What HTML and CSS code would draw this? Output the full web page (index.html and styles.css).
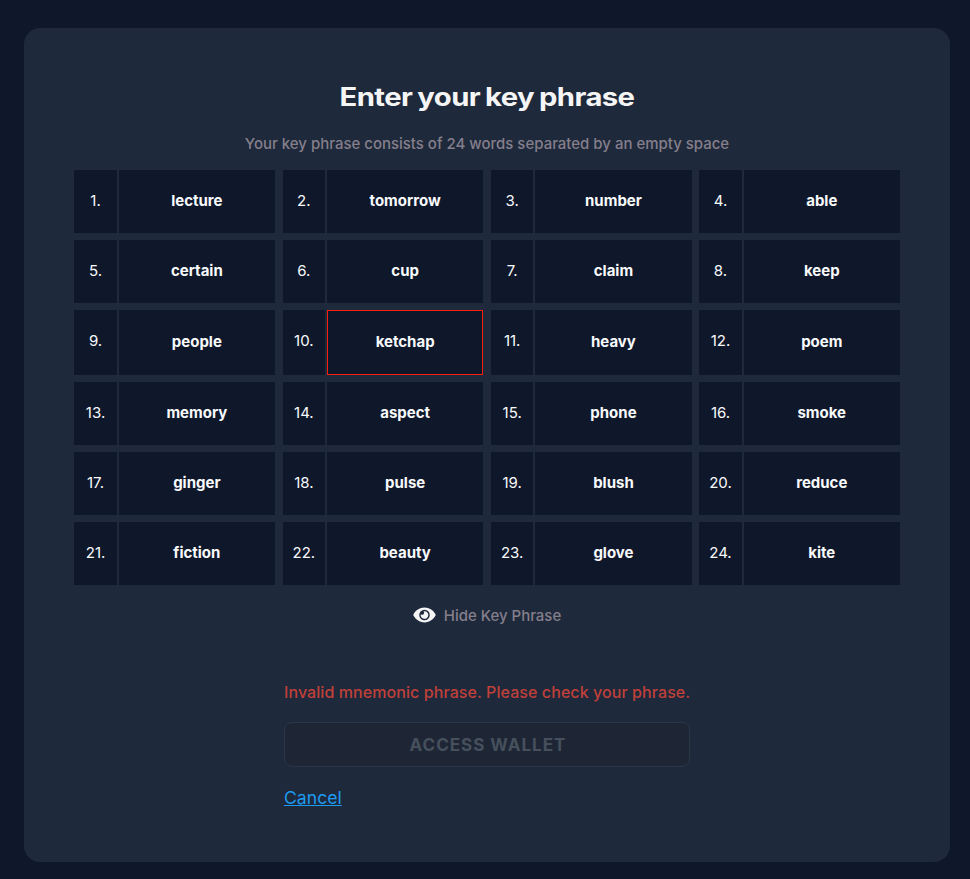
FILE: index.html
```html
<!DOCTYPE html>
<html lang="en">
<head>
<meta charset="utf-8">
<title>Enter your key phrase</title>
<link rel="stylesheet" href="styles.css">
</head>
<body>
<main class="card">
  <h1 class="title">Enter your key phrase</h1>
  <p class="subtitle">Your key phrase consists of 24 words separated by an empty space</p>
  <div class="words">
    <div class="word"><span class="num">1.</span><span class="text">lecture</span></div>
    <div class="word"><span class="num">2.</span><span class="text">tomorrow</span></div>
    <div class="word"><span class="num">3.</span><span class="text">number</span></div>
    <div class="word"><span class="num">4.</span><span class="text">able</span></div>
    <div class="word"><span class="num">5.</span><span class="text">certain</span></div>
    <div class="word"><span class="num">6.</span><span class="text">cup</span></div>
    <div class="word"><span class="num">7.</span><span class="text">claim</span></div>
    <div class="word"><span class="num">8.</span><span class="text">keep</span></div>
    <div class="word"><span class="num">9.</span><span class="text">people</span></div>
    <div class="word"><span class="num">10.</span><span class="text invalid">ketchap</span></div>
    <div class="word"><span class="num">11.</span><span class="text">heavy</span></div>
    <div class="word"><span class="num">12.</span><span class="text">poem</span></div>
    <div class="word"><span class="num">13.</span><span class="text">memory</span></div>
    <div class="word"><span class="num">14.</span><span class="text">aspect</span></div>
    <div class="word"><span class="num">15.</span><span class="text">phone</span></div>
    <div class="word"><span class="num">16.</span><span class="text">smoke</span></div>
    <div class="word"><span class="num">17.</span><span class="text">ginger</span></div>
    <div class="word"><span class="num">18.</span><span class="text">pulse</span></div>
    <div class="word"><span class="num">19.</span><span class="text">blush</span></div>
    <div class="word"><span class="num">20.</span><span class="text">reduce</span></div>
    <div class="word"><span class="num">21.</span><span class="text">fiction</span></div>
    <div class="word"><span class="num">22.</span><span class="text">beauty</span></div>
    <div class="word"><span class="num">23.</span><span class="text">glove</span></div>
    <div class="word"><span class="num">24.</span><span class="text">kite</span></div>
  </div>
  <div class="toggle">
    <svg class="eye" viewBox="0 0 24 16" aria-hidden="true">
      <path fill="currentColor" fill-rule="evenodd" d="M12 .3C6.900.3 2.500 3.400.200 8 2.500 12.600 6.900 15.700 12 15.700S21.500 12.600 23.800 8C21.500 3.400 17.100.3 12 .3zM12 2.500a5.500 5.500 0 1 1 0 11 5.500 5.500 0 0 1 0-11z"/>
      <path fill="currentColor" d="M12 4a4 4 0 1 1-3.900 3.100 1.900 1.900 0 1 0 2.900-2.900q.5-.2 1-.2z"/>
    </svg>
    <span>Hide Key Phrase</span>
  </div>
  <div class="actions">
    <p class="error">Invalid mnemonic phrase. Please check your phrase.</p>
    <button class="access" disabled>ACCESS WALLET</button>
    <a class="cancel" href="#">Cancel</a>
  </div>
</main>
</body>
</html>
```
FILE: styles.css
```css
* { box-sizing: border-box; }
body {
  margin: 0;
  padding: 28px 20px 17px 24px;
  background: #0f172a;
  color: #f8fafc;
  font-family: Inter, sans-serif;
}
.card {
  height: 834px;
  padding: 50px;
  border-radius: 16px;
  background: #1e293b;
}
.title {
  margin: 0;
  text-align: center;
  font-size: 25px;
  line-height: 38px;
  font-weight: 750;
  letter-spacing: -0.5px;
  word-spacing: -1.2px;
  color: #f5f5f5;
  transform: scaleX(1.17);
}
.subtitle {
  margin: 17px 0 15px;
  text-align: center;
  font-size: 14.97px;
  line-height: 22px;
  font-weight: 500;
  color: #857f8c;
}
.words {
  display: grid;
  grid-template-columns: repeat(4, 1fr);
  grid-template-rows: 63px 63px 65px 63px 63px 63px;
  gap: 7px 7.55px;
  padding-left: 0.3px;
}
.word {
  display: grid;
  grid-template-columns: 42.5px 1fr;
  gap: 1.8px;
  font-size: 15px;
}
.num, .text {
  display: flex;
  align-items: center;
  justify-content: center;
  padding-bottom: 2px;
  background: #0f172a;
}
.num { padding-bottom: 3px; }
.word:nth-child(n+9):nth-child(-n+12) .num { padding-bottom: 5px; }
.text { font-weight: 700; }
.invalid { border: 1px solid #fd1d0d; }
.toggle {
  display: flex;
  justify-content: center;
  align-items: center;
  gap: 8px;
  margin-top: 19px;
  height: 22px;
  font-size: 14.97px;
  font-weight: 500;
  color: #857f8c;
}
.eye { width: 23px; height: 16px; color: #f5f5f5; }
.actions { width: 406px; margin: 54px auto 0; }
.error {
  margin: 0 0 18px;
  font-size: 16px;
  line-height: 24px;
  letter-spacing: 0.08px;
  font-weight: 500;
  color: #c0403a;
  white-space: nowrap;
}
.access {
  display: block;
  width: 100%;
  height: 45px;
  padding: 0 0 0 2px;
  border: 1px solid #2a3545;
  border-radius: 8px;
  background: #1e2636;
  color: #46505c;
  font: 700 17px Inter, sans-serif;
  letter-spacing: 1px;
}
.cancel {
  display: inline-block;
  margin-top: 18px;
  font-size: 17.6px;
  line-height: 26px;
  color: #1d9bf0;
}
```
